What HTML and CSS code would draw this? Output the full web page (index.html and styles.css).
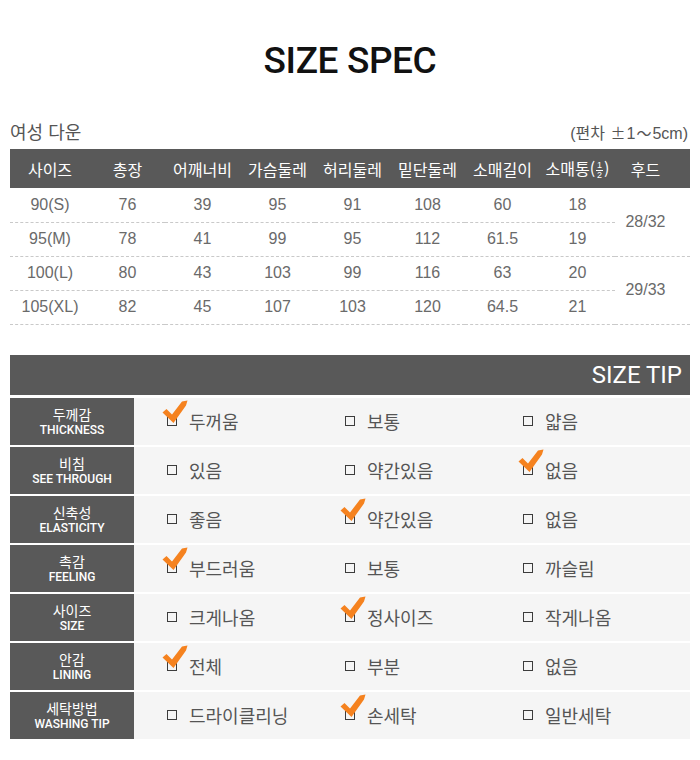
FILE: index.html
```html
<!DOCTYPE html>
<html lang="ko">
<head>
<meta charset="utf-8">
<title>SIZE SPEC</title>
<link rel="stylesheet" href="styles.css">
</head>
<body>
<div class="page">
  <h1 class="title">SIZE SPEC</h1>

  <div class="spec-head">
    <span class="product">여성 다운</span>
    <span class="tolerance">(편차 <span class="sym">±</span>1<span class="sym">～</span>5cm)</span>
  </div>

  <table class="spec">
    <colgroup>
      <col class="c-first">
      <col class="c"><col class="c"><col class="c"><col class="c">
      <col class="c"><col class="c"><col class="c"><col class="c">
    </colgroup>
    <thead>
      <tr>
        <th>사이즈</th><th>총장</th><th>어깨너비</th><th>가슴둘레</th><th>허리둘레</th>
        <th>밑단둘레</th><th>소매길이</th>
        <th class="sleeve">소매통(<span class="frac"><span class="num">1</span><span class="den">2</span></span>)</th>
        <th class="hood">후드</th>
      </tr>
    </thead>
    <tbody>
      <tr><td>90(S)</td><td>76</td><td>39</td><td>95</td><td>91</td><td>108</td><td>60</td><td>18</td><td class="hood" rowspan="2">28/32</td></tr>
      <tr><td>95(M)</td><td>78</td><td>41</td><td>99</td><td>95</td><td>112</td><td>61.5</td><td>19</td></tr>
      <tr><td>100(L)</td><td>80</td><td>43</td><td>103</td><td>99</td><td>116</td><td>63</td><td>20</td><td class="hood" rowspan="2">29/33</td></tr>
      <tr><td>105(XL)</td><td>82</td><td>45</td><td>107</td><td>103</td><td>120</td><td>64.5</td><td>21</td></tr>
    </tbody>
  </table>

  <div class="tip-bar">SIZE TIP</div>

  <div class="tips">
    <div class="tip-row">
      <div class="tip-label"><span class="ko">두께감</span><span class="en">THICKNESS</span></div>
      <div class="tip-opts">
        <span class="opt"><span class="box checked"><svg class="check" viewBox="0 0 26 24" width="26" height="24"><path d="M0.5 11.5 L4.5 8 L10 13.5 L20 0.5 L25.5 -0.5 L24 4.5 L11.5 22 Z"/></svg></span>두꺼움</span>
        <span class="opt"><span class="box"></span>보통</span>
        <span class="opt"><span class="box"></span>얇음</span>
      </div>
    </div>
    <div class="tip-row">
      <div class="tip-label"><span class="ko">비침</span><span class="en">SEE THROUGH</span></div>
      <div class="tip-opts">
        <span class="opt"><span class="box"></span>있음</span>
        <span class="opt"><span class="box"></span>약간있음</span>
        <span class="opt"><span class="box checked"><svg class="check" viewBox="0 0 26 24" width="26" height="24"><path d="M0.5 11.5 L4.5 8 L10 13.5 L20 0.5 L25.5 -0.5 L24 4.5 L11.5 22 Z"/></svg></span>없음</span>
      </div>
    </div>
    <div class="tip-row">
      <div class="tip-label"><span class="ko">신축성</span><span class="en">ELASTICITY</span></div>
      <div class="tip-opts">
        <span class="opt"><span class="box"></span>좋음</span>
        <span class="opt"><span class="box checked"><svg class="check" viewBox="0 0 26 24" width="26" height="24"><path d="M0.5 11.5 L4.5 8 L10 13.5 L20 0.5 L25.5 -0.5 L24 4.5 L11.5 22 Z"/></svg></span>약간있음</span>
        <span class="opt"><span class="box"></span>없음</span>
      </div>
    </div>
    <div class="tip-row">
      <div class="tip-label"><span class="ko">촉감</span><span class="en">FEELING</span></div>
      <div class="tip-opts">
        <span class="opt"><span class="box checked"><svg class="check" viewBox="0 0 26 24" width="26" height="24"><path d="M0.5 11.5 L4.5 8 L10 13.5 L20 0.5 L25.5 -0.5 L24 4.5 L11.5 22 Z"/></svg></span>부드러움</span>
        <span class="opt"><span class="box"></span>보통</span>
        <span class="opt"><span class="box"></span>까슬림</span>
      </div>
    </div>
    <div class="tip-row">
      <div class="tip-label"><span class="ko">사이즈</span><span class="en">SIZE</span></div>
      <div class="tip-opts">
        <span class="opt"><span class="box"></span>크게나옴</span>
        <span class="opt"><span class="box checked"><svg class="check" viewBox="0 0 26 24" width="26" height="24"><path d="M0.5 11.5 L4.5 8 L10 13.5 L20 0.5 L25.5 -0.5 L24 4.5 L11.5 22 Z"/></svg></span>정사이즈</span>
        <span class="opt"><span class="box"></span>작게나옴</span>
      </div>
    </div>
    <div class="tip-row">
      <div class="tip-label"><span class="ko">안감</span><span class="en">LINING</span></div>
      <div class="tip-opts">
        <span class="opt"><span class="box checked"><svg class="check" viewBox="0 0 26 24" width="26" height="24"><path d="M0.5 11.5 L4.5 8 L10 13.5 L20 0.5 L25.5 -0.5 L24 4.5 L11.5 22 Z"/></svg></span>전체</span>
        <span class="opt"><span class="box"></span>부분</span>
        <span class="opt"><span class="box"></span>없음</span>
      </div>
    </div>
    <div class="tip-row">
      <div class="tip-label"><span class="ko">세탁방법</span><span class="en">WASHING TIP</span></div>
      <div class="tip-opts">
        <span class="opt"><span class="box"></span>드라이클리닝</span>
        <span class="opt"><span class="box checked"><svg class="check" viewBox="0 0 26 24" width="26" height="24"><path d="M0.5 11.5 L4.5 8 L10 13.5 L20 0.5 L25.5 -0.5 L24 4.5 L11.5 22 Z"/></svg></span>손세탁</span>
        <span class="opt"><span class="box"></span>일반세탁</span>
      </div>
    </div>
  </div>
</div>
</body>
</html>
```

FILE: styles.css
```css
* { box-sizing: border-box; }

body {
  margin: 0;
  background: #ffffff;
  font-family: "Liberation Sans", "Noto Sans CJK KR", sans-serif;
  color: #666666;
}

.page {
  width: 700px;
  padding: 0 10px;
}

.title {
  margin: 39px 0 0;
  font-family: Roboto, "Liberation Sans", sans-serif;
  font-weight: 500;
  font-size: 37px;
  line-height: 44px;
  letter-spacing: -0.4px;
  text-align: center;
  color: #111111;
}

.spec-head {
  margin-top: 35px;
  height: 26px;
  display: flex;
  justify-content: space-between;
  align-items: baseline;
  line-height: 26px;
  color: #555555;
}

.product {
  font-family: "Noto Sans CJK KR", sans-serif;
  font-size: 18px;
}

.tolerance {
  font-size: 16px;
  padding-right: 2px;
}

.tolerance .sym {
  font-family: "Noto Sans CJK KR", sans-serif;
  font-size: 15px;
  margin: 0 1px;
}

.spec {
  margin-top: 5px;
  width: 680px;
  border-collapse: collapse;
  table-layout: fixed;
}

.c-first { width: 80px; }
.c { width: 75px; }

.spec th {
  height: 39px;
  padding: 0;
  background: #595959;
  color: #ffffff;
  font-family: "Noto Sans CJK KR", sans-serif;
  font-weight: 400;
  font-size: 16px;
  text-align: center;
  white-space: nowrap;
}

.spec td {
  height: 34px;
  padding: 0;
  text-align: center;
  font-size: 16px;
  color: #6a6a6a;
  border-bottom: 1px dashed #c9c9c9;
}

.spec .hood { padding-right: 14px; }

.frac {
  display: inline-flex;
  flex-direction: column;
  align-items: center;
  vertical-align: middle;
  font-family: "Liberation Sans", sans-serif;
  font-size: 9px;
  line-height: 9px;
  margin: 0 1px;
  position: relative;
  top: -1px;
}

.frac .num {
  border-bottom: 1px solid #ffffff;
  padding: 0 1px;
}

.tip-bar {
  margin-top: 30px;
  height: 40px;
  background: #595959;
  color: #ffffff;
  font-family: Roboto, "Liberation Sans", sans-serif;
  font-size: 24px;
  line-height: 40px;
  text-align: right;
  padding-right: 8px;
}

.tips {
  margin-top: 3px;
  display: flex;
  flex-direction: column;
  gap: 2px;
}

.tip-row {
  display: grid;
  grid-template-columns: 124px 1fr;
  height: 47px;
}

.tip-label {
  background: #595959;
  color: #ffffff;
  display: flex;
  flex-direction: column;
  align-items: center;
  justify-content: center;
}

.tip-label .ko {
  font-family: "Noto Sans CJK KR", sans-serif;
  font-size: 14px;
  line-height: 18px;
}

.tip-label .en {
  font-family: Roboto, "Liberation Sans", sans-serif;
  font-weight: 500;
  font-size: 12px;
  line-height: 14px;
}

.tip-opts {
  background: #f5f5f5;
  display: grid;
  grid-template-columns: 178px 178px 1fr;
  align-items: center;
  padding-left: 33px;
}

.opt {
  display: inline-flex;
  align-items: center;
  font-family: "Noto Sans CJK KR", sans-serif;
  font-size: 18px;
  color: #555555;
}

.box {
  position: relative;
  width: 10px;
  height: 10px;
  border: 1.5px solid #3c3c3c;
  margin-right: 12px;
  flex: none;
}

.check {
  position: absolute;
  left: -6px;
  top: -16px;
  fill: #f5821f;
  overflow: visible;
}
```
